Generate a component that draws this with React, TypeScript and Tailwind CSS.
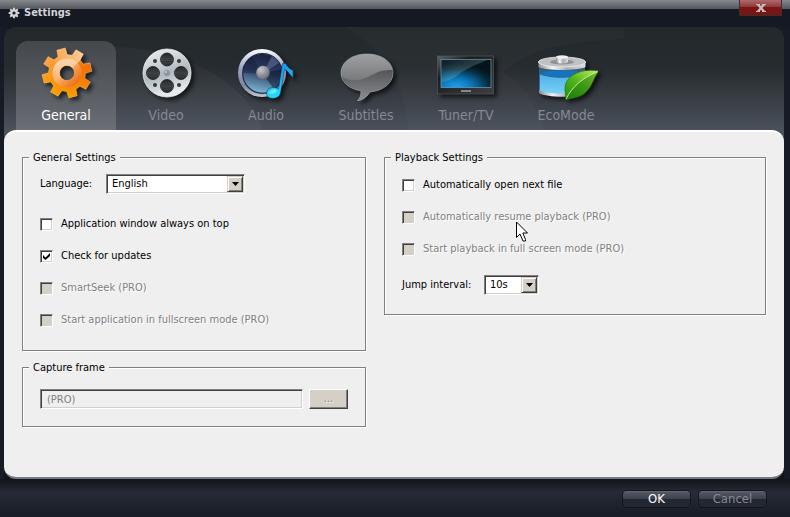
import React, { useState } from 'react';

// Builds the outline of a cog centred on 0,0
const gearPath = (teeth: number, outer: number, root: number, offset: number): string => {
  const points: string[] = [];
  const step = 360 / teeth;
  for (let i = 0; i < teeth; i++) {
    const mid = offset + i * step;
    const corners = [
      [root, mid - step * 0.33],
      [outer, mid - step * 0.22],
      [outer, mid + step * 0.22],
      [root, mid + step * 0.33],
    ];
    corners.forEach(([r, deg]) => {
      const rad = (deg * Math.PI) / 180;
      points.push(`${(r * Math.cos(rad)).toFixed(2)} ${(r * Math.sin(rad)).toFixed(2)}`);
    });
  }
  return `M${points.join('L')}Z`;
};

const bigGear = `${gearPath(8, 25, 18.5, -14)}M7.500 0A7.500 7.500 0 1 0-7.500 0A7.500 7.500 0 1 0 7.500 0Z`;

const iconClass = 'h-14 w-16 drop-shadow-[3px_3px_2px_rgba(0,0,0,0.65)]';

const GeneralIcon = () => (
  <svg viewBox="-33 -28 64 56" className={iconClass} aria-hidden="true">
    <defs>
      <linearGradient id="gearBody" x1="0" y1="0" x2="1" y2="1">
        <stop offset="0" stopColor="#ffb562" />
        <stop offset="0.35" stopColor="#f99325" />
        <stop offset="0.65" stopColor="#f07205" />
        <stop offset="1" stopColor="#f36a08" />
      </linearGradient>
      <linearGradient id="gearLow" x1="0.6" y1="0" x2="0.4" y2="1">
        <stop offset="0.4" stopColor="#ffae00" stopOpacity="0" />
        <stop offset="1" stopColor="#ffae00" stopOpacity="0.8" />
      </linearGradient>
      <linearGradient id="gearRing" x1="0" y1="0" x2="1" y2="1">
        <stop offset="0" stopColor="#ffd0a0" />
        <stop offset="0.5" stopColor="#fba65a" />
        <stop offset="1" stopColor="#ea6c10" />
      </linearGradient>
      <linearGradient id="gearShine" x1="0" y1="0" x2="1" y2="0">
        <stop offset="0" stopColor="#fff" stopOpacity="0.05" />
        <stop offset="1" stopColor="#fff" stopOpacity="0.6" />
      </linearGradient>
      <clipPath id="gearClip">
        <path clipRule="evenodd" d={bigGear} />
      </clipPath>
    </defs>
    <path fillRule="evenodd" fill="url(#gearBody)" stroke="#ffc07a" strokeWidth="0.5" d={bigGear} />
    <path fillRule="evenodd" fill="url(#gearLow)" d={bigGear} />
    <circle r="11" fill="none" stroke="url(#gearRing)" strokeWidth="7" />
    <path clipPath="url(#gearClip)" fill="url(#gearShine)" d="M-14 -26H17V-16L4 -4L-10 8Z" />
  </svg>
);

const VideoIcon = () => (
  <svg viewBox="-33 -28 64 56" className={iconClass} aria-hidden="true">
    <defs>
      <linearGradient id="reel" x1="0" y1="0" x2="0.3" y2="1">
        <stop offset="0" stopColor="#f1f3f4" />
        <stop offset="0.45" stopColor="#c3cacf" />
        <stop offset="0.6" stopColor="#afb9bf" />
        <stop offset="1" stopColor="#e6ecee" />
      </linearGradient>
      <linearGradient id="reelHole" x1="0" y1="0" x2="0" y2="1">
        <stop offset="0" stopColor="#1f2123" />
        <stop offset="0.5" stopColor="#4b4e50" />
        <stop offset="1" stopColor="#27292b" />
      </linearGradient>
    </defs>
    <circle r="24" fill="url(#reel)" stroke="#edf0f1" strokeWidth="0.8" />
    {[[0, -13.5], [0, 13], [-14, 0], [14, 0]].map(([x, y]) => (
      <g key={`${x}${y}`}>
        <circle cx={x} cy={y} r="6.500" fill="url(#reelHole)" stroke="#1b1e20" strokeWidth="0.8" />
        <path stroke="#292b2d" strokeWidth="0.7" d={`M${x - 5} ${y - 2}h10M${x - 5} ${y}h10M${x - 5} ${y + 2}h10`} />
      </g>
    ))}
    {[[-12, -12], [12, -12], [-12, 12], [12, 12]].map(([x, y]) => (
      <circle key={`${x}${y}`} cx={x} cy={y} r="2" fill="#34393c" />
    ))}
    <circle r="3.4" fill="#87939a" stroke="#bcc5ca" strokeWidth="0.6" />
    <circle cx="-1" cy="-1" r="1.2" fill="#b9c3c8" />
  </svg>
);

const AudioIcon = () => (
  <svg viewBox="-30 -28 64 56" className={iconClass} aria-hidden="true">
    <defs>
      <linearGradient id="speakerRim" x1="0" y1="0" x2="0" y2="1">
        <stop offset="0" stopColor="#ffffff" />
        <stop offset="0.4" stopColor="#9aa3c0" />
        <stop offset="0.75" stopColor="#7e869f" />
        <stop offset="1" stopColor="#c3c8d6" />
      </linearGradient>
      <linearGradient id="speakerCone" x1="0.5" y1="0" x2="0.3" y2="1">
        <stop offset="0" stopColor="#1c2040" />
        <stop offset="0.45" stopColor="#2c3f66" />
        <stop offset="1" stopColor="#86c0dc" />
      </linearGradient>
      <radialGradient id="speakerCap" cx="0.35" cy="0.3" r="0.8">
        <stop offset="0" stopColor="#c6c6cc" />
        <stop offset="1" stopColor="#62626e" />
      </radialGradient>
      <linearGradient id="note" x1="0" y1="0" x2="0" y2="1">
        <stop offset="0" stopColor="#1a96ee" />
        <stop offset="1" stopColor="#25dcf8" />
      </linearGradient>
    </defs>
    <circle cx="-2" r="24" fill="url(#speakerRim)" />
    <circle cx="-1.500" cy="0.500" r="19.800" fill="url(#speakerCone)" stroke="#242a48" strokeWidth="1.2" />
    <path fill="#5a6897" opacity="0.65" d="M-1.500 .5L8-17A20 20 0 0 1 15-10Z" />
    <path fill="#0c1123" opacity="0.5" d="M-1.500 .5L18-4A20 20 0 0 1 10 16Z" />
    <path fill="#0c1123" opacity="0.3" d="M-1.500 .5L-21 0A20 20 0 0 1-12-17Z" />
    <circle cx="-1" cy="-0.500" r="6.800" fill="url(#speakerCap)" />
    <path
      fill="url(#note)"
      stroke="#0c3050"
      strokeWidth="0.5"
      d="M18.500-9.500H22C23-6 27-3 29-3V5C26 2 24-2 20.500-4L16.500 20C15 27 3 27 2.500 21C2 14 11 13 14.500 16Z"
    />
    <path fill="#7cf6ff" opacity="0.7" d="M5 20C6 16 12 15 13 18C13 20 7 22 5 20Z" />
  </svg>
);

const SubtitlesIcon = () => (
  <svg viewBox="-33 -29 64 56" className={iconClass} aria-hidden="true">
    <defs>
      <linearGradient id="bubble" x1="0" y1="0" x2="0" y2="1">
        <stop offset="0" stopColor="#9fa0a2" />
        <stop offset="0.6" stopColor="#75777a" />
        <stop offset="1" stopColor="#8c8e91" />
      </linearGradient>
      <linearGradient id="bubbleLow" x1="0" y1="0" x2="0" y2="1">
        <stop offset="0" stopColor="#535559" />
        <stop offset="1" stopColor="#8b8d90" />
      </linearGradient>
    </defs>
    <path
      fill="url(#bubble)"
      stroke="#a9aaac"
      strokeWidth="0.6"
      d="M0-20C15-20 26-12 26-1C26 9 16 17 3 18C0 23-4 26-10 27C-7 25-6 21-6 17C-18 15-26 8-26-1C-26-12-15-20 0-20Z"
    />
    <path
      fill="url(#bubbleLow)"
      d="M-25 3C-10 11 2 2 9-1C15-4 21-4 25.500-4C27 9 16 17 3 17.500C0 22-4 25-9 26.500C-6 24-5 21-5.500 16.500C-16 15-23 10-25 3Z"
    />
  </svg>
);

const TunerIcon = () => (
  <svg viewBox="-32 -28 64 56" className={iconClass} aria-hidden="true">
    <defs>
      <radialGradient id="screen" cx="0.3" cy="1" r="0.85">
        <stop offset="0" stopColor="#18a5f2" />
        <stop offset="0.4" stopColor="#0b74b4" />
        <stop offset="0.8" stopColor="#072838" />
        <stop offset="1" stopColor="#05141c" />
      </radialGradient>
      <linearGradient id="bezel" x1="0" y1="0" x2="1" y2="1">
        <stop offset="0" stopColor="#606366" />
        <stop offset="0.3" stopColor="#1c1d1f" />
        <stop offset="1" stopColor="#3d3f42" />
      </linearGradient>
      <linearGradient id="glare" x1="0" y1="0" x2="1" y2="0.7">
        <stop offset="0" stopColor="#a8cfd0" stopOpacity="0.05" />
        <stop offset="1" stopColor="#a8cfd0" stopOpacity="0.35" />
      </linearGradient>
    </defs>
    <rect x="-28.500" y="-17" width="56" height="38" fill="url(#bezel)" stroke="#55585b" strokeWidth="0.7" />
    <rect x="-25" y="-13.500" width="50" height="28" fill="url(#screen)" stroke="#6fa3b0" strokeWidth="0.7" />
    <path fill="url(#glare)" d="M-24.500-13H21C10-8 0-5-8 2C-14 7-20 8-24.500 9Z" />
    <path stroke="#bfc3c6" strokeWidth="1.200" d="M-5 18H5" />
  </svg>
);

const EcoIcon = () => (
  <svg viewBox="-32 -28 64 56" className={iconClass} aria-hidden="true">
    <defs>
      <linearGradient id="metal" x1="0" y1="0" x2="1" y2="0">
        <stop offset="0" stopColor="#8c8f92" />
        <stop offset="0.3" stopColor="#f4f5f5" />
        <stop offset="0.6" stopColor="#a9acae" />
        <stop offset="1" stopColor="#dcdedf" />
      </linearGradient>
      <linearGradient id="glass" x1="0" y1="0" x2="0" y2="1">
        <stop offset="0" stopColor="#53585f" />
        <stop offset="0.3" stopColor="#2a5f96" />
        <stop offset="1" stopColor="#2f86c6" />
      </linearGradient>
      <linearGradient id="water" x1="0" y1="0" x2="0" y2="1">
        <stop offset="0" stopColor="#50afe6" />
        <stop offset="1" stopColor="#7bd4f6" />
      </linearGradient>
      <linearGradient id="leaf" x1="0" y1="1" x2="1" y2="0">
        <stop offset="0" stopColor="#238a0c" />
        <stop offset="0.5" stopColor="#55b81c" />
        <stop offset="1" stopColor="#c3ef62" />
      </linearGradient>
    </defs>
    <path fill="url(#glass)" d="M-27-9H19V18C12 24-20 24-27 18Z" />
    <path fill="url(#water)" d="M-26 1C-18 6 10 6 18 1V18C10 23-18 23-26 18Z" />
    <path fill="#1673bd" d="M-26 1C-18-4 10-4 18 1C10 5-18 5-26 1Z" />
    <path fill="url(#metal)" d="M-27 17C-19 22 11 22 19 17V20C11 25-19 25-27 20Z" />
    <path fill="url(#metal)" d="M-27.500-11H19.500V-6C11-2-19-2-27.500-6Z" />
    <ellipse cx="-4" cy="-11" rx="23.500" ry="5" fill="#bfc1c3" stroke="#f1f1f1" strokeWidth="0.800" />
    <ellipse cx="-4" cy="-11" rx="12" ry="2.500" fill="#8f9295" />
    <path fill="url(#metal)" d="M-10-16H2V-11C-1-9-7-9-10-11Z" />
    <ellipse cx="-4" cy="-16" rx="6" ry="1.800" fill="#eeefef" />
    <path
      fill="url(#leaf)"
      stroke="#1c6d0a"
      strokeWidth="0.600"
      d="M33-2C22-4 7-2 1 8C-3 15 0 21 0 27C5 25 13 25 19 20C27 13 27 5 33-2Z"
    />
    <path fill="#176708" opacity="0.400" d="M0 27C6 14 17 4 33-2C27 5 27 13 19 20C13 25 5 25 0 27Z" />
    <path fill="none" stroke="#d6f594" strokeWidth="0.900" d="M0 26C6 14 16 5 31-1" />
  </svg>
);

const tabs = [
  { name: 'General', Icon: GeneralIcon },
  { name: 'Video', Icon: VideoIcon },
  { name: 'Audio', Icon: AudioIcon },
  { name: 'Subtitles', Icon: SubtitlesIcon },
  { name: 'Tuner/TV', Icon: TunerIcon },
  { name: 'EcoMode', Icon: EcoIcon },
];

interface GroupProps {
  title: string;
  className: string;
  children: React.ReactNode;
}

const Group = ({ title, className, children }: GroupProps) => (
  <fieldset className="min-w-0 border border-[#808080] shadow-[1px_1px_0_#fff,inset_1px_1px_0_#fff]">
    <legend className="ml-1.5 h-4 bg-[#efefef] px-1 leading-[18px]">{title}</legend>
    <div className={className}>{children}</div>
  </fieldset>
);

interface CheckProps {
  label: string;
  checked?: boolean;
  disabled?: boolean;
}

const Check = ({ label, checked, disabled }: CheckProps) => (
  <label
    className={`flex h-4 items-center gap-2 leading-[18px] whitespace-nowrap ${
      disabled ? 'text-[#808080] [text-shadow:1px_1px_0_#fff]' : 'text-black'
    }`}
  >
    <span className="grid place-items-center *:col-start-1 *:row-start-1">
      <input
        type="checkbox"
        defaultChecked={checked}
        disabled={disabled}
        className="peer size-[13px] appearance-none border border-t-[#808080] border-r-white border-b-white border-l-[#808080] bg-white shadow-[inset_1px_1px_0_#404040,inset_-1px_-1px_0_#d4d0c8] disabled:bg-[#d4d0c8]"
      />
      <svg viewBox="0 0 7 7" className="pointer-events-none hidden size-[7px] peer-checked:block" aria-hidden="true">
        <path d="M0 2L2.500 4.500L7 0V3L2.500 7L0 5Z" />
      </svg>
    </span>
    {label}
  </label>
);

interface DropDownProps {
  id: string;
  options: string[];
  className: string;
}

const DropDown = ({ id, options, className }: DropDownProps) => (
  <div className={`relative ${className}`}>
    <select
      id={id}
      className="h-5 w-full appearance-none border border-t-[#808080] border-r-white border-b-white border-l-[#808080] bg-white pl-[5px] text-black shadow-[inset_1px_1px_0_#404040,inset_-1px_-1px_0_#d4d0c8] outline-none"
    >
      {options.map((option) => (
        <option key={option}>{option}</option>
      ))}
    </select>
    <span className="pointer-events-none absolute inset-y-0.5 right-0.5 grid w-4 place-items-center border border-t-[#d4d0c8] border-r-[#404040] border-b-[#404040] border-l-[#d4d0c8] bg-[#d4d0c8] shadow-[inset_1px_1px_0_#fff,inset_-1px_-1px_0_#808080]">
      <svg viewBox="0 0 7 4" className="h-1 w-[7px]" aria-hidden="true">
        <path d="M0 0H7L3.500 4Z" />
      </svg>
    </span>
  </div>
);

const footerButton =
  'h-[18px] w-[69px] rounded-[4px] border border-[#11141b] bg-linear-to-b from-[#565b66] from-0% via-[#3b404a] via-50% to-[#232731] to-50% text-[13px] leading-4 shadow-[inset_0_1px_0_#626772,0_0_1px_#3a3f49]';

export default function App() {
  const [active, setActive] = useState('General');

  return (
    <div className="flex min-h-screen flex-col bg-[#171b25] font-['DejaVu_Sans_Condensed','DejaVu_Sans',sans-serif] text-[11px]">
      {/* Title bar */}
      <header className="flex h-[27px] items-start justify-between bg-[linear-gradient(#85888c_0px,#53575d_9px,#151923_9px)] px-2">
        <h1 className="flex h-[26px] items-center gap-1 text-[11px] font-bold text-[#d3d4d6]">
          <svg viewBox="-6 -6 12 12" className="size-3" aria-hidden="true">
            <path fill="#d3d4d6" fillRule="evenodd" d={`${gearPath(8, 5.4, 4, 0)}M1.600 0A1.600 1.600 0 1 0-1.600 0A1.600 1.600 0 1 0 1.600 0Z`} />
          </svg>
          Settings
        </h1>
        <button
          type="button"
          aria-label="Close"
          className="grid h-4 w-[43px] place-items-center border border-t-0 border-[#3a3034] bg-linear-to-b from-[#ad6a6b] from-0% via-[#8c3335] via-50% to-[#7a1513] to-50%"
        >
          <svg viewBox="0 0 10 8" className="h-2 w-2.5" aria-hidden="true">
            <path fill="#c9bcbd" d="M0 0H4V1L5 2.500L6 1V0H10V1H9L6.500 4L9 7H10V8H6V7L5 5.500L4 7V8H0V7H1L3.500 4L1 1H0Z" />
          </svg>
        </button>
      </header>

      {/* Category tabs */}
      <div className="relative mr-1.5 ml-1 rounded-t-xl bg-linear-to-b from-[#23282b] from-0% via-[#272c30] via-40% to-[#4b515b] px-3 pt-3.5">
        <svg className="pointer-events-none absolute inset-0 h-full w-full" aria-hidden="true">
          <path fill="#fff" opacity="0.03" d="M20 103C50 60 80 30 105 20C160 18 240 45 258 103Z" />
          <path fill="#fff" opacity="0.02" d="M340 0C385 25 400 60 405 103H540C530 70 515 55 500 45C520 28 540 16 620 12V0Z" />
        </svg>
        <nav className="relative flex" role="tablist">
          {tabs.map(({ name, Icon }) => (
            <button
              key={name}
              type="button"
              role="tab"
              aria-selected={active === name}
              onClick={() => setActive(name)}
              className={`flex h-[89px] w-[100px] flex-col items-center rounded-t-xl pt-1 text-[14px] leading-5 ${
                active === name ? 'bg-linear-to-b from-[#44484c] to-[#6a6e75] text-white' : 'text-[#858994]'
              }`}
            >
              <Icon />
              <span className="mt-1">{name}</span>
            </button>
          ))}
        </nav>
      </div>

      {/* Settings page */}
      <div className="mr-1.5 ml-1 flex flex-1 bg-linear-to-b from-[#4b515b] from-0% via-[#4b515b] via-50% to-[#12141a] to-50%">
        <main className="grid flex-1 grid-cols-[344fr_382fr] items-start gap-[18px] rounded-xl border-t-2 border-b-2 border-t-white border-b-[#747985] bg-[#efefef] px-[18px] pt-[17px] pb-5 text-black">
          <div className="flex flex-col gap-2">
            <Group title="General Settings" className="flex flex-col gap-4 px-[17px] pt-[9px] pb-[22px]">
              <div className="mb-1.5 flex items-center">
                <label htmlFor="language" className="w-[66px] leading-[18px]">
                  Language:
                </label>
                <DropDown id="language" options={['English', 'Deutsch']} className="w-[139px]" />
              </div>
              <Check label="Application window always on top" />
              <Check label="Check for updates" checked />
              <Check label="SmartSeek (PRO)" disabled />
              <Check label="Start application in fullscreen mode (PRO)" disabled />
            </Group>

            <Group title="Capture frame" className="flex gap-1.5 px-[17px] pt-3.5 pb-[17px]">
              <input
                type="text"
                aria-label="Capture frame"
                defaultValue="(PRO)"
                disabled
                className="h-5 min-w-0 flex-1 border border-t-[#808080] border-r-white border-b-white border-l-[#808080] pl-1.5 text-[#808080] shadow-[inset_1px_1px_0_#404040,inset_-1px_-1px_0_#d4d0c8]"
              />
              <button
                type="button"
                disabled
                className="h-5 w-[39px] border border-t-white border-r-[#404040] border-b-[#404040] border-l-white bg-[#d4d0c8] leading-4 text-[#808080] shadow-[inset_-1px_-1px_0_#808080] [text-shadow:1px_1px_0_#fff]"
              >
                ...
              </button>
            </Group>
          </div>

          <Group title="Playback Settings" className="flex flex-col gap-4 px-[17px] pt-3 pb-[19px]">
            <Check label="Automatically open next file" />
            <div className="relative">
              <Check label="Automatically resume playback (PRO)" disabled />
              {/* Mouse pointer */}
              <svg viewBox="0 0 12 21" className="pointer-events-none absolute top-3 left-[114px] h-[21px] w-3" aria-hidden="true">
                <path
                  fill="#fff"
                  stroke="#000"
                  strokeWidth="1"
                  d="M.5 1V16.500L4 13L7 20H9.500V18.500L6.800 12H11.500Z"
                />
              </svg>
            </div>
            <Check label="Start playback in full screen mode (PRO)" disabled />
            <div className="mt-0.5 flex items-center">
              <label htmlFor="jump" className="w-[82px] leading-[18px]">
                Jump interval:
              </label>
              <DropDown id="jump" options={['10s', '30s']} className="w-[55px]" />
            </div>
          </Group>
        </main>
      </div>

      {/* Footer */}
      <footer className="flex h-[38px] items-start justify-end gap-[7px] bg-linear-to-b from-[#12141a] via-[#262b36] via-35% to-[#171b25] pt-[11px] pr-[23px]">
        <button type="button" className={`${footerButton} text-white`}>
          OK
        </button>
        <button type="button" className={`${footerButton} text-[#858994]`}>
          Cancel
        </button>
      </footer>
    </div>
  );
}
